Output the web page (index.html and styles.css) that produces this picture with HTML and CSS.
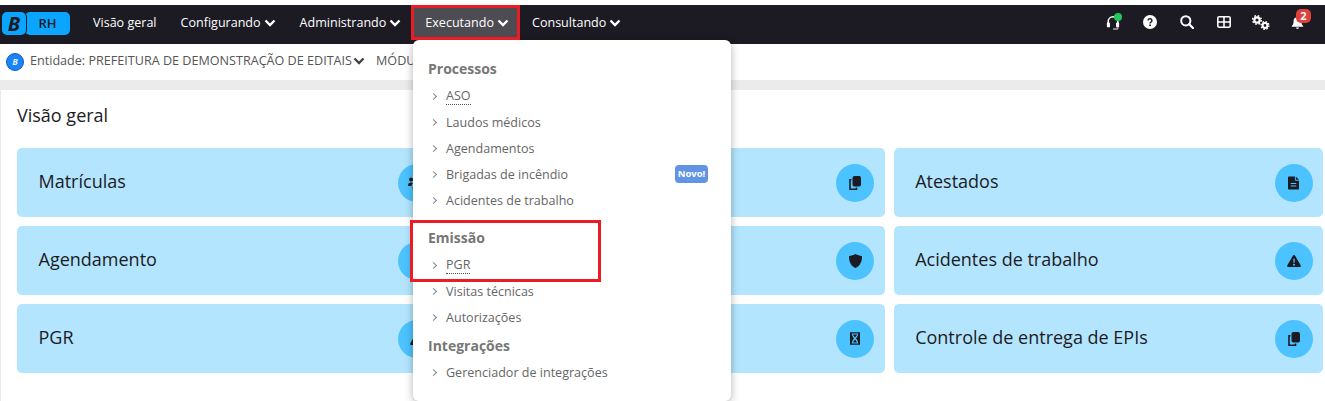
FILE: index.html
```html
<!DOCTYPE html>
<html lang="pt-BR">
<head>
    <meta charset="UTF-8">
    <meta name="viewport" content="width=device-width, initial-scale=1.0">
    <title>Visão geral</title>
    <link rel="stylesheet" href="styles.css">
</head>
<body>
    <div class="page">
        <nav class="navbar">
            <div class="brand">
                <span class="brand-b">B</span>
                <span class="brand-rh">RH</span>
            </div>
            <div class="nav-links">
                <a class="nav-link">Visão geral</a>
                <a class="nav-link">Configurando
                    <svg class="chev" viewBox="0 0 12 8"><path d="M1.5 1.5 6 6l4.5-4.5"/></svg></a>
                <a class="nav-link">Administrando
                    <svg class="chev" viewBox="0 0 12 8"><path d="M1.5 1.5 6 6l4.5-4.5"/></svg></a>
                <a class="nav-link active">Executando
                    <svg class="chev" viewBox="0 0 12 8"><path d="M1.5 1.5 6 6l4.5-4.5"/></svg></a>
                <a class="nav-link">Consultando
                    <svg class="chev" viewBox="0 0 12 8"><path d="M1.5 1.5 6 6l4.5-4.5"/></svg></a>
            </div>
            <div class="nav-icons">
                <span class="nav-icon">
                    <svg viewBox="0 0 16 17" width="14" height="15"><path d="M2.5 10V7.500a5.500 5.500 0 0 1 11 0V10" fill="none" stroke="#fff" stroke-width="1.800"/><rect x="1" y="8.500" width="3.500" height="5.500" rx="1" fill="#fff"/><rect x="11.500" y="8.500" width="3.500" height="5.500" rx="1" fill="#fff"/><path d="M13.500 14v1a1 1 0 0 1-1 1H8" fill="none" stroke="#a8a8a8" stroke-width="1.600"/></svg>
                    <span class="online"></span>
                </span>
                <span class="nav-icon">
                    <svg viewBox="0 0 14 14" width="14" height="14"><circle cx="7" cy="7" r="7" fill="#fff"/><path d="M5.100 5.600a1.900 1.900 0 1 1 2.900 1.600c-.7.400-1 .6-1 1.300" fill="none" stroke="#1c1b24" stroke-width="1.500"/><rect x="6.200" y="9.500" width="1.700" height="1.600" fill="#1c1b24"/></svg>
                </span>
                <span class="nav-icon">
                    <svg viewBox="0 0 14 14" width="14" height="14"><circle cx="5.800" cy="5.800" r="4.600" fill="none" stroke="#fff" stroke-width="2"/><path d="m9.200 9.200 4 4" stroke="#fff" stroke-width="2.200" stroke-linecap="round"/></svg>
                </span>
                <span class="nav-icon">
                    <svg viewBox="0 0 14 12" width="14" height="12"><rect x=".8" y=".8" width="12.400" height="10.400" rx="1.500" fill="none" stroke="#fff" stroke-width="1.600"/><path d="M7 1v10M1 6h12" stroke="#fff" stroke-width="1.600"/></svg>
                </span>
                <span class="nav-icon">
                    <svg viewBox="0 0 18 15" width="18" height="15"><circle cx="5" cy="5" r="2.700" fill="none" stroke="#fff" stroke-width="2.200"/><circle cx="5" cy="5" r="4.300" fill="none" stroke="#fff" stroke-width="1.500" stroke-dasharray="1.700 1.700"/><circle cx="13" cy="10.500" r="2.400" fill="none" stroke="#fff" stroke-width="2"/><circle cx="13" cy="10.500" r="3.900" fill="none" stroke="#fff" stroke-width="1.400" stroke-dasharray="1.500 1.560"/></svg>
                </span>
                <span class="nav-icon">
                    <svg viewBox="0 0 14 16" width="13" height="14"><path d="M7 1a1 1 0 0 1 1 1v.6A4.500 4.500 0 0 1 11.500 7c0 3.500 1 4.500 2 5.500v.8H.5v-.8c1-1 2-2 2-5.500A4.500 4.500 0 0 1 6 2.600V2a1 1 0 0 1 1-1zM5.300 14.200h3.400a1.700 1.700 0 0 1-3.400 0z" fill="#fff"/></svg>
                    <span class="badge-count">2</span>
                </span>
            </div>
        </nav>

        <div class="subbar">
            <span class="entity-logo">B</span>
            <span class="entity-name">Entidade: PREFEITURA DE DEMONSTRAÇÃO DE EDITAIS</span>
            <svg class="chev dark" viewBox="0 0 12 8"><path d="M1.5 1.5 6 6l4.500-4.500"/></svg>
            <span class="entity-name">MÓDULO</span>
        </div>

        <main class="content">
            <h1 class="page-title">Visão geral</h1>
            <div class="tiles">
                <div class="tile">
                    <span class="tile-name">Matrículas</span>
                    <span class="tile-icon"><svg viewBox="0 0 18 14" width="18" height="14"><circle cx="3" cy="3.500" r="2"/><circle cx="15" cy="3.500" r="2"/><circle cx="9" cy="3.500" r="2.700"/><path d="M0 10c0-2.500 1-3.600 3-3.600 1 0 1.500.3 2 .8-1 .8-1.500 1.700-1.500 2.800zM18 10c0-2.500-1-3.600-3-3.600-1 0-1.500.3-2 .8 1 .8 1.500 1.700 1.500 2.800zM4.500 13c0-3.500 1.500-5.200 4.500-5.200s4.500 1.700 4.500 5.200z"/></svg></span>
                </div>
                <div class="tile">
                    <span class="tile-icon"><svg viewBox="0 0 12 14" width="12" height="14"><use href="#ic-copy"/></svg></span>
                </div>
                <div class="tile">
                    <span class="tile-name">Atestados</span>
                    <span class="tile-icon"><svg viewBox="0 0 12 14" width="11" height="14"><path d="M1 0h6.500v3.500a1 1 0 0 0 1 1H12V13a1 1 0 0 1-1 1H1a1 1 0 0 1-1-1V1a1 1 0 0 1 1-1zM8.500 0 12 3.500H8.500zM3 7v1.200h6V7zM3 9.700v1.200h6V9.700z" fill-rule="evenodd"/></svg></span>
                </div>
                <div class="tile">
                    <span class="tile-name">Agendamento</span>
                    <span class="tile-icon"></span>
                </div>
                <div class="tile">
                    <span class="tile-icon"><svg viewBox="0 0 14 15" width="13" height="14"><path d="M7 0c2 1.200 4.500 1.800 7 2 .2 6-2 11-7 13C2 13-.2 8 0 2c2.500-.2 5-.8 7-2z"/></svg></span>
                </div>
                <div class="tile">
                    <span class="tile-name">Acidentes de trabalho</span>
                    <span class="tile-icon"><svg viewBox="0 0 15 13" width="14" height="12"><use href="#ic-warn"/></svg></span>
                </div>
                <div class="tile">
                    <span class="tile-name">PGR</span>
                    <span class="tile-icon"><svg viewBox="0 0 15 13" width="14" height="12"><use href="#ic-warn"/></svg></span>
                </div>
                <div class="tile">
                    <span class="tile-icon"><svg viewBox="0 0 11 14" width="10" height="13"><path d="M0 0h11v14H0zM2 1.600c0 2 1 3.900 2.500 5.400C3 8.500 2 10.400 2 12.400h7c0-2-1-3.900-2.500-5.400C8 5.500 9 3.600 9 1.600z" fill-rule="evenodd"/><path d="M3 2.500h5L5.500 6zM3.200 11.500 5.500 8l2.300 3.500z"/></svg></span>
                </div>
                <div class="tile">
                    <span class="tile-name">Controle de entrega de EPIs</span>
                    <span class="tile-icon"><svg viewBox="0 0 12 14" width="12" height="14"><use href="#ic-copy"/></svg></span>
                </div>
            </div>
        </main>

        <div class="dropdown">
            <div class="menu-group first">Processos</div>
            <a class="menu-item"><span class="underlined">ASO</span></a>
            <a class="menu-item">Laudos médicos</a>
            <a class="menu-item">Agendamentos</a>
            <a class="menu-item">Brigadas de incêndio<span class="novo">Novo!</span></a>
            <a class="menu-item">Acidentes de trabalho</a>
            <div class="menu-group second">Emissão</div>
            <a class="menu-item"><span class="underlined">PGR</span></a>
            <a class="menu-item">Visitas técnicas</a>
            <a class="menu-item">Autorizações</a>
            <div class="menu-group third">Integrações</div>
            <a class="menu-item">Gerenciador de integrações</a>
        </div>

        <div class="mark mark-nav"></div>
        <div class="mark mark-pgr"></div>
    </div>

    <svg class="defs" width="0" height="0">
        <symbol id="ic-copy" viewBox="0 0 12 14"><path d="M5.500 0H10a2 2 0 0 1 2 2v6.500a2 2 0 0 1-2 2H5.500a2 2 0 0 1-2-2V2a2 2 0 0 1 2-2z"/><path d="M2.500 3.700H1v9.500h6.500v-1.700" fill="none" stroke="#1c1b24" stroke-width="1.600"/></symbol>
        <symbol id="ic-warn" viewBox="0 0 15 13"><path d="M7.500 0c.5 0 .9.300 1.200.8l6 10.400c.5.900-.1 1.800-1.100 1.800H1.400c-1 0-1.600-.9-1.100-1.800L6.300.8C6.600.3 7 0 7.500 0zM6.700 4l.2 4.500h1.200L8.300 4zM7.500 9.400a1.100 1.100 0 1 0 0 2.200 1.100 1.100 0 0 0 0-2.200z" fill-rule="evenodd"/></symbol>
    </svg>
</body>
</html>
```

FILE: styles.css
```css
html, body {
    margin: 0;
    background: #fff;
    overflow: hidden;
}

body {
    font-family: "Open Sans", sans-serif;
    color: #1c1b24;
}

.page {
    position: relative;
    width: 1325px;
    height: 401px;
    padding-top: 5px;
    box-sizing: border-box;
    overflow: hidden;
}

.navbar {
    display: flex;
    align-items: center;
    height: 39px;
    background-color: #1c1b24;
}

.brand {
    display: flex;
    align-items: center;
    margin: 0 0 2px 2px;
    width: 68px;
    height: 23px;
}

.brand-b {
    position: relative;
    width: 24px;
    height: 23px;
    background-color: #0aa5ff;
    border-radius: 5px;
    box-shadow: 1px 0 0 #1c1b24;
    color: #1c1b24;
    font: italic bold 20px/23px "Open Sans", sans-serif;
    text-align: center;
}

.brand-rh {
    flex: 1;
    height: 23px;
    margin-left: -1px;
    background-color: #0aa5ff;
    border-radius: 5px;
    color: #1c1b24;
    font-size: 13px;
    font-weight: 600;
    line-height: 23px;
    text-align: center;
}

.nav-links {
    display: flex;
    align-items: center;
    margin: 0 0 4px 11px;
}

.nav-link {
    display: flex;
    align-items: center;
    gap: 3px;
    height: 33px;
    padding: 0 12px;
    color: #fff;
    font-size: 12.55px;
}

.nav-link.active {
    padding-right: 11px;
    background-color: #4d4c53;
}

.chev {
    width: 12px;
    height: 8px;
    fill: none;
    stroke: #fff;
    stroke-width: 2.4;
}

.chev.dark {
    stroke: #444;
    margin: 0 11px 3px 1px;
}

.nav-icons {
    display: flex;
    align-items: center;
    margin: 0 9px 5px auto;
}

.nav-icon {
    position: relative;
    display: flex;
    justify-content: center;
    width: 37px;
}

.online {
    position: absolute;
    top: -2px;
    left: 20px;
    width: 8px;
    height: 8px;
    border-radius: 50%;
    background-color: #1fc85a;
}

.badge-count {
    position: absolute;
    top: -6px;
    left: 17px;
    width: 15px;
    height: 14px;
    border-radius: 5px;
    background-color: #e0403c;
    color: #fff;
    font-size: 11px;
    font-weight: 700;
    line-height: 14px;
    text-align: center;
}

.subbar {
    display: flex;
    align-items: center;
    height: 36px;
    padding-left: 6px;
    color: #555;
    font-size: 12.6px;
    background-color: #fff;
}

.entity-logo {
    width: 16px;
    height: 16px;
    margin: 0 6px 0 0;
    border: 1px solid #0a5fd0;
    border-radius: 50%;
    background-color: #1a84f5;
    color: #dfeeff;
    font-size: 9px;
    font-style: italic;
    font-weight: 700;
    line-height: 16px;
    text-align: center;
}

.entity-name {
    margin-bottom: 3px;
}

.content {
    padding: 10px 2px 0 17px;
    height: 321px;
    box-sizing: border-box;
    border-top: 10px solid #ebebeb;
    box-shadow: inset 1px 0 0 #ebebeb;
}

.page-title {
    margin: 0;
    height: 48px;
    font-size: 18px;
    font-weight: 400;
    line-height: 30px;
}

.tiles {
    display: grid;
    grid-template-columns: repeat(3, 1fr);
    grid-auto-rows: 69px;
    gap: 9px;
}

.tile {
    display: flex;
    align-items: center;
    justify-content: space-between;
    padding: 0 10.5px 0 21.5px;
    border-radius: 5px;
    background-color: #b3e5fe;
}

.tile-name {
    font-size: 18px;
    position: relative;
    top: -2px;
}

.tile-icon {
    display: flex;
    align-items: center;
    justify-content: center;
    width: 38px;
    height: 38px;
    margin-left: auto;
    border-radius: 50%;
    background-color: #4cc3ff;
}

.tile-icon svg {
    fill: #1c1b24;
}

.dropdown {
    position: absolute;
    top: 40px;
    left: 413px;
    width: 318px;
    height: 361px;
    box-sizing: border-box;
    padding: 19px 23px 0 15px;
    background-color: #fff;
    border-radius: 6px;
    box-shadow: 0 2px 8px rgba(0, 0, 0, 0.3);
}

.menu-group {
    height: 20px;
    margin-bottom: 4px;
    color: #777;
    font-size: 14px;
    font-weight: 700;
    line-height: 20px;
}

.menu-group.second {
    margin: 15px 0 4px;
}

.menu-group.third {
    margin: 6px 0 3px;
}

.menu-item {
    display: flex;
    align-items: center;
    position: relative;
    height: 26px;
    padding-left: 18px;
    color: #666;
    font-size: 12.55px;
}

.menu-item::before {
    content: "";
    position: absolute;
    left: 3px;
    top: 11px;
    width: 4px;
    height: 4px;
    border-top: 1px solid #888;
    border-right: 1px solid #888;
    transform: rotate(45deg);
}

.underlined {
    border-bottom: 1px dotted #555;
    line-height: 16px;
}

.novo {
    width: 33px;
    height: 18px;
    margin-left: auto;
    border-radius: 4px;
    background-color: #6195e4;
    color: #fff;
    font-size: 9.5px;
    font-weight: 700;
    line-height: 18px;
    text-align: center;
}

.mark {
    position: absolute;
    box-sizing: border-box;
    border: 3px solid #ed1c24;
}

.mark-nav {
    top: 5px;
    left: 411px;
    width: 109px;
    height: 35px;
}

.mark-pgr {
    top: 220px;
    left: 410px;
    width: 191px;
    height: 62px;
}

.defs {
    position: absolute;
}
```
